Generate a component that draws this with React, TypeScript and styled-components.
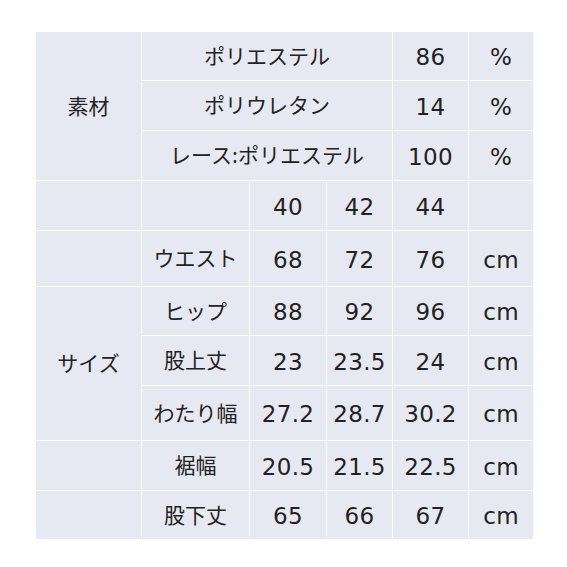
import styled, { createGlobalStyle } from "styled-components";

const GlobalStyle = createGlobalStyle`
  body {
    margin: 0;
    background: #ffffff;
  }
`;

const Page = styled.div`
  padding: 31px 0 0 35px;
`;

const Table = styled.table`
  width: 498px;
  border-collapse: collapse;
  table-layout: fixed;
  background: #e7e9f2;
  color: #222222;
`;

const Row = styled.tr<{ h: number }>`
  height: ${({ h }) => h}px;
`;

const Cell = styled.td<{ num?: boolean }>`
  border: 1px solid #ffffff;
  padding: ${({ num }) => (num ? "4px 0 0" : "0 0 1px")};
  text-align: center;
  vertical-align: middle;
  white-space: nowrap;
  font-family: ${({ num }) =>
    num
      ? '"DejaVu Sans", "Noto Sans CJK JP", sans-serif'
      : '"Noto Sans CJK JP", sans-serif'};
  font-size: ${({ num }) => (num ? "23px" : "21px")};
  letter-spacing: ${({ num }) => (num ? "0.3px" : "0")};
  line-height: 1.2;
`;

const widths = [106, 108, 77, 66, 76, 65];

const sizes = [
  { label: "ウエスト", v: ["68", "72", "76"] },
  { label: "ヒップ", v: ["88", "92", "96"] },
  { label: "股上丈", v: ["23", "23.5", "24"] },
  { label: "わたり幅", v: ["27.2", "28.7", "30.2"] },
  { label: "裾幅", v: ["20.5", "21.5", "22.5"] },
  { label: "股下丈", v: ["65", "66", "67"] },
];
const sizeHeights = [56, 49, 50, 55, 50, 49];

export default function App() {
  return (
    <Page>
      <GlobalStyle />
      <Table>
        <colgroup>
          {widths.map((w, i) => (
            <col key={i} style={{ width: w }} />
          ))}
        </colgroup>
        <tbody>
          <Row h={49}>
            <Cell rowSpan={3}>素材</Cell>
            <Cell colSpan={3}>ポリエステル</Cell>
            <Cell num>86</Cell>
            <Cell num>%</Cell>
          </Row>
          <Row h={50}>
            <Cell colSpan={3}>ポリウレタン</Cell>
            <Cell num>14</Cell>
            <Cell num>%</Cell>
          </Row>
          <Row h={50}>
            <Cell colSpan={3}>レース:ポリエステル</Cell>
            <Cell num>100</Cell>
            <Cell num>%</Cell>
          </Row>
          <Row h={50}>
            <Cell />
            <Cell />
            <Cell num>40</Cell>
            <Cell num>42</Cell>
            <Cell num>44</Cell>
            <Cell />
          </Row>
          {sizes.map((s, i) => (
            <Row key={s.label} h={sizeHeights[i]}>
              {i === 1 && <Cell rowSpan={3}>サイズ</Cell>}
              {(i === 0 || i > 3) && <Cell />}
              <Cell>{s.label}</Cell>
              {s.v.map((n) => (
                <Cell num key={n}>
                  {n}
                </Cell>
              ))}
              <Cell num>cm</Cell>
            </Row>
          ))}
        </tbody>
      </Table>
    </Page>
  );
}
